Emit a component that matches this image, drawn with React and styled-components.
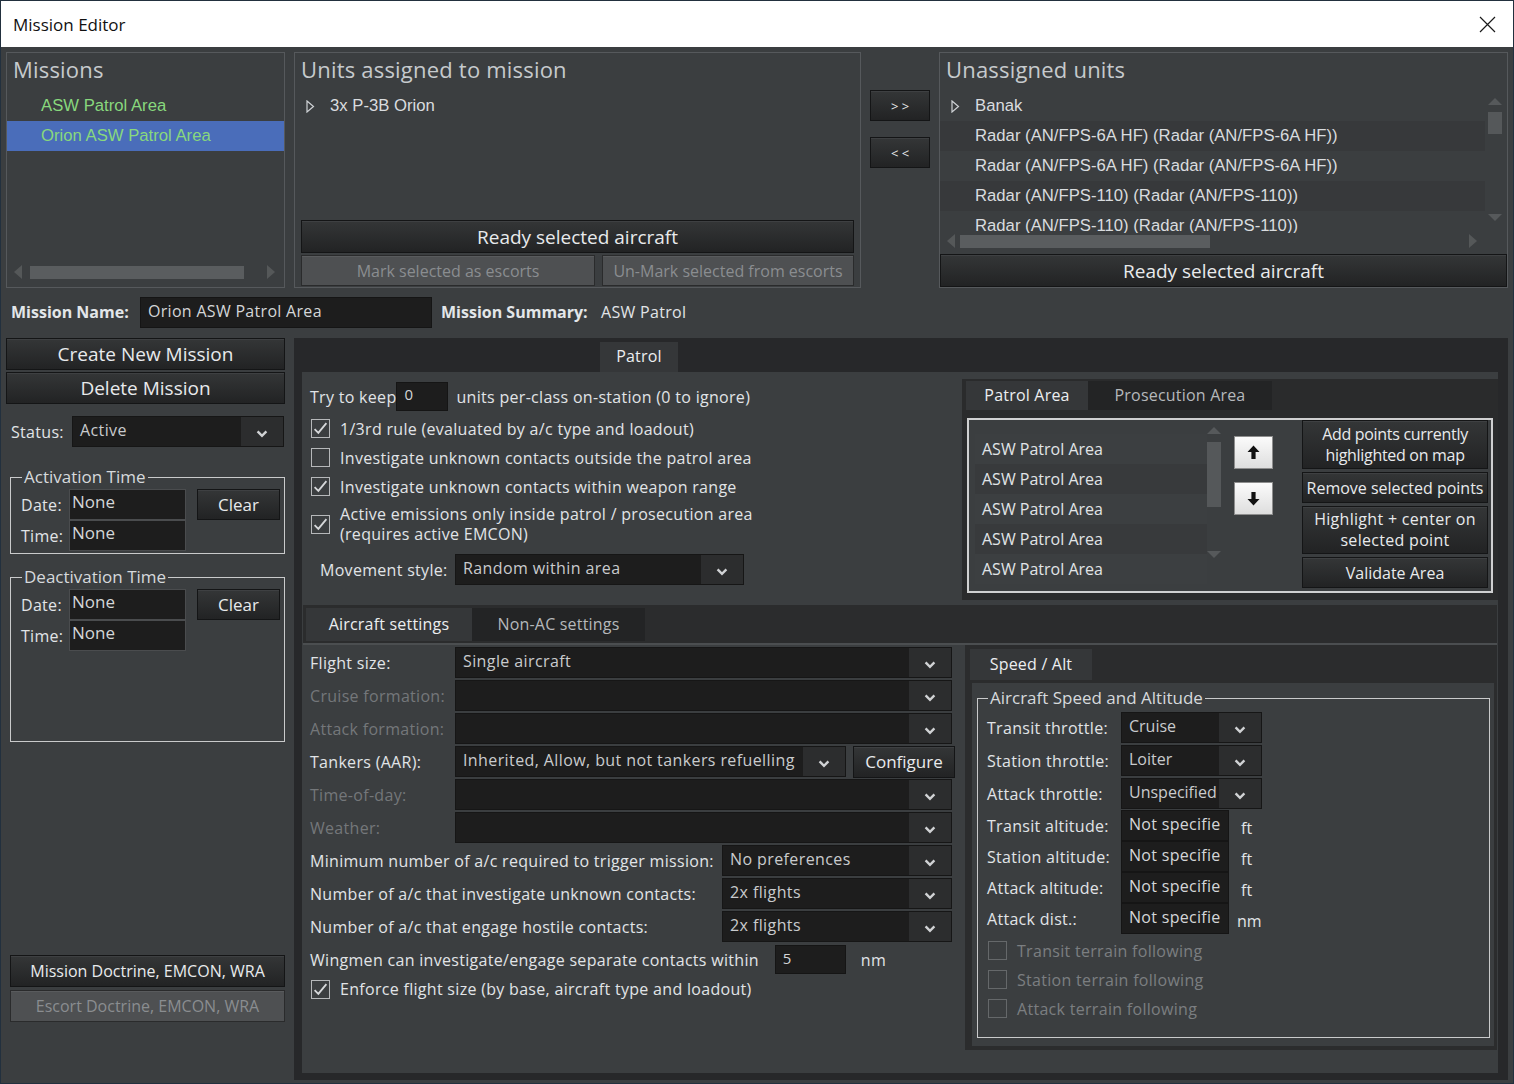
import React from "react";
import styled, { createGlobalStyle, css } from "styled-components";

const UI = `"Open Sans", "Noto Sans", "DejaVu Sans", sans-serif`;
const ARIAL = `"Liberation Sans", Arial, sans-serif`;

const GlobalStyle = createGlobalStyle`
  * { box-sizing: border-box; }
  html, body { margin: 0; padding: 0; background: #ffffff; }
  body { font-family: ${UI}; }
`;

/* ---------- window frame ---------- */
const Window = styled.div`
  width: 1514px;
  height: 1084px;
  border: 1px solid #22303e;
  display: flex;
  flex-direction: column;
  overflow: hidden;
`;
const TitleBar = styled.div`
  height: 46px;
  flex: none;
  background: #ffffff;
  display: flex;
  align-items: center;
  justify-content: space-between;
  padding-left: 12px;
`;
const TitleText = styled.div`
  font: 17px ${UI};
  color: #111;
`;
const CloseButton = styled.div`
  width: 50px;
  height: 46px;
  display: flex;
  align-items: center;
  justify-content: center;
  margin-right: 1px;
`;
const Body = styled.div`
  flex: 1;
  min-height: 0;
  background: #3b3e40;
  padding: 5px 5px 3px 5px;
  display: flex;
  flex-direction: column;
`;

/* ---------- generic pieces ---------- */
const Spacer = styled.div`
  flex: 1;
`;
const Panel = styled.div`
  display: flex;
  flex-direction: column;
  border: 1px solid #56595c;
  ${(p) => (p.$w ? `width:${p.$w}px; flex:none;` : `flex:1; min-width:0;`)}
`;
const PanelTitle = styled.div`
  height: 38px;
  flex: none;
  padding-left: 6px;
  font: 22px/33px ${UI};
  letter-spacing: 0.2px;
  color: #c6cacd;
`;
const Btn = styled.div`
  display: flex;
  align-items: center;
  justify-content: center;
  text-align: center;
  flex: none;
  height: ${(p) => p.$h ?? 31}px;
  ${(p) => (p.$w ? `width:${p.$w}px;` : "")}
  ${(p) => (p.$grow ? "flex:1;" : "")}
  margin: ${(p) => p.$m ?? "0"};
  font: ${(p) => p.$fs ?? 16}px/${(p) => p.$lh ?? 20}px ${UI};
  letter-spacing: ${(p) => p.$ls ?? 0}px;
  color: #e8eaec;
  background: linear-gradient(#343637, #222324);
  border: 1px solid #141516;
  box-shadow: inset 0 1px 0 #3e4042;
  white-space: nowrap;
  ${(p) =>
    p.$disabled &&
    css`
      color: #8a8d90;
      background: #4e5052;
      border-color: #2a2b2c;
      box-shadow: inset 0 1px 0 #595b5d;
    `}
  ${(p) =>
    p.$light &&
    css`
      background: linear-gradient(#fbfbfb, #dedede);
      border-color: #8e8e8e;
      box-shadow: none;
    `}
`;
const Tri = styled.span`
  width: 0;
  height: 0;
  flex: none;
  ${(p) =>
    p.$dir === "left" &&
    css`
      border-top: 7px solid transparent;
      border-bottom: 7px solid transparent;
      border-right: 8px solid #555859;
    `}
  ${(p) =>
    p.$dir === "right" &&
    css`
      border-top: 7px solid transparent;
      border-bottom: 7px solid transparent;
      border-left: 8px solid #555859;
    `}
  ${(p) =>
    p.$dir === "up" &&
    css`
      border-left: 7px solid transparent;
      border-right: 7px solid transparent;
      border-bottom: 7px solid #56595b;
    `}
  ${(p) =>
    p.$dir === "down" &&
    css`
      border-left: 7px solid transparent;
      border-right: 7px solid transparent;
      border-top: 7px solid #56595b;
    `}
`;
const HScroll = styled.div`
  height: 16px;
  flex: none;
  display: flex;
  align-items: center;
  padding: 0 ${(p) => p.$pr}px 0 ${(p) => p.$pl}px;
  margin-bottom: ${(p) => p.$mb ?? 0}px;
`;
const HThumb = styled.div`
  height: 13px;
  flex: none;
  background: #5a5d5f;
  width: ${(p) => p.$w}px;
  margin-left: ${(p) => p.$ml}px;
`;
const VScroll = styled.div`
  width: 14px;
  flex: none;
  display: flex;
  flex-direction: column;
  align-items: center;
  height: ${(p) => p.$h}px;
  margin: ${(p) => p.$m};
`;
const VThumb = styled.div`
  width: 14px;
  background: #55585a;
  height: ${(p) => p.$h}px;
  margin-top: ${(p) => p.$mt}px;
`;

/* ---------- top row ---------- */
const TopRow = styled.div`
  display: flex;
  gap: 9px;
  height: 236px;
  flex: none;
`;
const MissionItem = styled.div`
  height: 30px;
  flex: none;
  padding-left: 34px;
  font: 16.7px/30px ${ARIAL};
  color: #88d87d;
  background: ${(p) => (p.$selected ? "#4a6dba" : "transparent")};
`;
const TreeRow = styled.div`
  height: 30px;
  flex: none;
  display: flex;
  align-items: center;
  padding-left: ${(p) => p.$pl}px;
  font: 16.7px ${ARIAL};
  color: #d9dcdf;
  white-space: nowrap;
  background: ${(p) => (p.$alt ? "#37393b" : "transparent")};
`;
const TreeText = styled.span`
  margin-left: ${(p) => p.$ml ?? 0}px;
`;
const ButtonPair = styled.div`
  display: flex;
  gap: 7px;
  margin: 2px 6px 1px 6px;
  flex: none;
`;
const ArrowCol = styled.div`
  width: 60px;
  flex: none;
  display: flex;
  flex-direction: column;
  gap: 16px;
  padding-top: 38px;
`;
const ListWrap = styled.div`
  height: 142px;
  flex: none;
  display: flex;
`;
const ListRows = styled.div`
  flex: 1;
  overflow: hidden;
  min-width: 0;
`;

/* ---------- name row ---------- */
const NameRow = styled.div`
  display: flex;
  align-items: center;
  height: 32px;
  flex: none;
  margin-top: 8px;
`;
const BoldLabel = styled.div`
  font: 700 16px ${UI};
  color: #e3e6e9;
  white-space: nowrap;
  width: ${(p) => p.$w}px;
  padding-left: ${(p) => p.$pl ?? 0}px;
  flex: none;
`;
const TextField = styled.div`
  height: ${(p) => p.$h ?? 31}px;
  width: ${(p) => p.$w}px;
  flex: none;
  background: #1d1d1d;
  border: 1px solid ${(p) => p.$border ?? "#151515"};
  font: ${(p) => p.$fs ?? 16}px/${(p) => p.$lh ?? 26}px ${UI};
  letter-spacing: ${(p) => p.$ls ?? 0.3}px;
  color: #d4d6d8;
  padding-left: ${(p) => p.$pl ?? 7}px;
  white-space: nowrap;
  overflow: hidden;
  margin: ${(p) => p.$m ?? "0"};
`;
const PlainText = styled.div`
  font: ${(p) => p.$fs ?? 16}px ${UI};
  letter-spacing: 0.3px;
  color: ${(p) => (p.$dim ? "#74777a" : "#e1e4e7")};
  white-space: nowrap;
  margin: ${(p) => p.$m ?? "0"};
  ${(p) => (p.$w ? `width:${p.$w}px; flex:none;` : "")}
`;

/* ---------- bottom ---------- */
const BottomRow = styled.div`
  flex: 1;
  min-height: 0;
  display: flex;
  gap: 9px;
  margin-top: 10px;
`;
const LeftCol = styled.div`
  width: 279px;
  flex: none;
  display: flex;
  flex-direction: column;
`;
const StatusRow = styled.div`
  display: flex;
  align-items: center;
  margin-top: 12px;
  height: 31px;
  flex: none;
`;
const Group = styled.fieldset`
  margin: ${(p) => p.$m ?? "0"};
  padding: ${(p) => p.$pad ?? "0"};
  border: 1px solid #c9cacb;
  min-width: 0;
  ${(p) => (p.$h ? `height:${p.$h}px; flex:none;` : p.$fill ? "flex:1;" : "flex:none;")}
`;
const Legend = styled.legend`
  font: ${(p) => p.$fs ?? 17}px/20px ${UI};
  color: #d6d9dc;
  padding: 0 2px;
  margin-left: ${(p) => p.$ml ?? 1}px;
`;
const TimeGrid = styled.div`
  display: grid;
  grid-template-columns: 48px 117px auto;
  grid-auto-rows: 31px;
  align-items: center;
`;
const ChevronBox = styled.div`
  width: ${(p) => p.$w ?? 42}px;
  flex: none;
  background: #2c2d2e;
  display: flex;
  align-items: center;
  justify-content: center;
  padding-top: 5px;
`;
const SelectBox = styled.div`
  display: flex;
  height: ${(p) => p.$h ?? 31}px;
  ${(p) => (p.$w ? `width:${p.$w}px; flex:none;` : "flex:1;")}
  background: #1d1d1d;
  border: 1px solid #161616;
`;
const SelectValue = styled.div`
  flex: 1;
  min-width: 0;
  padding-left: 7px;
  font: 16px/27px ${UI};
  letter-spacing: ${(p) => p.$ls ?? 0.4}px;
  color: #c9cbcd;
  white-space: nowrap;
  overflow: hidden;
`;

/* ---------- right tab area ---------- */
const TabContainer = styled.div`
  flex: 1;
  min-width: 0;
  background: #27282a;
  display: flex;
  flex-direction: column;
`;
const MainTabBar = styled.div`
  height: 34px;
  flex: none;
  display: flex;
  align-items: flex-end;
  padding-left: 306px;
`;
const Tab = styled.div`
  height: ${(p) => p.$h ?? 30}px;
  width: ${(p) => p.$w}px;
  flex: none;
  display: flex;
  align-items: center;
  justify-content: center;
  padding-bottom: 2px;
  font: 16px ${UI};
  letter-spacing: 0.2px;
  color: ${(p) => (p.$active ? "#eceef0" : "#b5b8bb")};
  background: ${(p) => (p.$active ? "#353739" : "#232425")};
`;
const MainPane = styled.div`
  flex: 1;
  min-height: 0;
  margin: 0 10px 7px 8px;
  background: #3b3e40;
  display: flex;
  flex-direction: column;
`;
const TopSection = styled.div`
  height: 228px;
  flex: none;
  display: flex;
`;
const PatrolLeft = styled.div`
  flex: 1;
  padding: 10px 0 0 8px;
  display: flex;
  flex-direction: column;
`;
const InlineRow = styled.div`
  display: flex;
  align-items: center;
  height: ${(p) => p.$h ?? 29}px;
  flex: none;
  margin: ${(p) => p.$m ?? "0"};
`;
const CheckRow = styled.div`
  display: flex;
  align-items: center;
  gap: 10px;
  min-height: ${(p) => p.$h ?? 29}px;
  flex: none;
  padding-left: 1px;
  margin: ${(p) => p.$m ?? "0"};
`;
const CheckText = styled.div`
  font: 16px/20px ${UI};
  letter-spacing: 0.3px;
  color: ${(p) => (p.$dim ? "#7b7e81" : "#e1e4e7")};
  white-space: nowrap;
`;
const CheckBoxFrame = styled.span`
  width: 19px;
  height: 19px;
  flex: none;
  border: 1px solid ${(p) => (p.$dim ? "#65686a" : "#b6b8ba")};
  display: inline-flex;
  align-items: center;
  justify-content: center;
`;
const PatrolAreaGroup = styled.div`
  width: 536px;
  height: 221px;
  flex: none;
  margin-top: 7px;
  background: #2a2b2c;
  display: flex;
  flex-direction: column;
`;
const SubTabBar = styled.div`
  display: flex;
  flex: none;
  padding: ${(p) => p.$pad};
  height: ${(p) => p.$h}px;
`;
const AreaBox = styled.div`
  margin: 8px 5px 0 5px;
  height: 175px;
  flex: none;
  border: 2px solid #cfd0d1;
  background: #3b3e40;
  display: flex;
  align-items: flex-start;
`;
const AreaList = styled.div`
  width: 232px;
  flex: none;
  margin: 14px 0 0 6px;
`;
const AreaRow = styled.div`
  height: 30px;
  padding-left: 7px;
  font: 16px/30px ${UI};
  color: #e1e4e7;
  background: ${(p) => (p.$alt ? "#383a3c" : "#3c3f41")};
`;
const ArrowBtnCol = styled.div`
  display: flex;
  flex-direction: column;
  gap: 13px;
  margin: 16px 0 0 13px;
  flex: none;
`;
const AreaBtnCol = styled.div`
  width: 186px;
  flex: none;
  display: flex;
  flex-direction: column;
  gap: 3px;
  margin-left: 29px;
`;
const LowerTabs = styled.div`
  flex: 1;
  min-height: 0;
  margin: 5px 1px 0 1px;
  background: #2b2c2d;
  display: flex;
  flex-direction: column;
`;
const LowerPane = styled.div`
  flex: 1;
  min-height: 0;
  border-top: 2px solid #4b4e50;
  background: #3b3e40;
  display: flex;
`;
const LeftForm = styled.div`
  width: 662px;
  flex: none;
  padding: 1px 0 0 7px;
  display: flex;
  flex-direction: column;
`;
const FormRow = styled.div`
  display: flex;
  align-items: center;
  height: ${(p) => p.$h ?? 33}px;
  flex: none;
  margin: ${(p) => p.$m ?? "0"};
`;
const SpeedAlt = styled.div`
  flex: 1;
  margin-bottom: 23px;
  background: #2b2c2d;
  padding: 4px 3px 4px 5px;
  display: flex;
  flex-direction: column;
`;
const SpeedContent = styled.div`
  flex: 1;
  margin: 3px 0 0 2px;
  background: #3b3e40;
  padding: 5px 4px 8px 5px;
  display: flex;
  flex-direction: column;
`;
const UnitText = styled.div`
  font: 16px ${UI};
  color: #e1e4e7;
  margin: 4px 0 0 ${(p) => p.$ml}px;
`;

/* ---------- icons ---------- */
const CloseIcon = () => (
  <svg width="17" height="17" viewBox="0 0 17 17">
    <path d="M1 1 L16 16 M16 1 L1 16" stroke="#1a1a1a" strokeWidth="1.2" />
  </svg>
);
const Chevron = () => (
  <svg width="12" height="8" viewBox="0 0 12 8">
    <path d="M1.6 1.4 L6 5.8 L10.4 1.4" fill="none" stroke="#d0d2d4" strokeWidth="2.4" />
  </svg>
);
const TreeToggle = () => (
  <svg width="9" height="13" viewBox="0 0 9 13">
    <path d="M1 1 L7.5 6.5 L1 12 Z" fill="none" stroke="#cfd2d5" strokeWidth="1.2" />
  </svg>
);
const CheckMark = () => (
  <svg width="15" height="15" viewBox="0 0 14 14">
    <path d="M1.5 7.5 L5 11 L12.5 2" fill="none" stroke="#d6d8da" strokeWidth="1.7" />
  </svg>
);
const ArrowUp = ({ down }) => (
  <svg width="13" height="15" viewBox="0 0 13 15" style={down ? { transform: "rotate(180deg)" } : undefined}>
    <path d="M6.5 0.5 L12.5 7 H8.6 V14 H4.4 V7 H0.5 Z" fill="#111" />
  </svg>
);

/* ---------- compositions ---------- */
const Select = ({ w, value = "", h, arrowW, ls }) => (
  <SelectBox $w={w} $h={h}>
    <SelectValue $ls={ls}>{value}</SelectValue>
    <ChevronBox $w={arrowW}>
      <Chevron />
    </ChevronBox>
  </SelectBox>
);
const Check = ({ checked, dim, children, h, m }) => (
  <CheckRow $h={h} $m={m}>
    <CheckBoxFrame $dim={dim}>{checked && <CheckMark />}</CheckBoxFrame>
    <CheckText $dim={dim}>{children}</CheckText>
  </CheckRow>
);

const TimeGroup = ({ title, h, m }) => (
  <Group $m={m} $h={h} $pad="2px 4px 2px 10px">
    <Legend>{title}</Legend>
    <TimeGrid>
      <PlainText>Date:</PlainText>
      <TextField $w={117} $fs={17} $lh={24} $pl={2} $ls={0} $border="#4a4c4e">
        None
      </TextField>
      <Btn $w={83} $m="0 0 0 11px" $fs={17}>
        Clear
      </Btn>
      <PlainText>Time:</PlainText>
      <TextField $w={117} $fs={17} $lh={24} $pl={2} $ls={0} $border="#4a4c4e">
        None
      </TextField>
    </TimeGrid>
  </Group>
);

const unassigned = [
  "Radar (AN/FPS-6A HF) (Radar (AN/FPS-6A HF))",
  "Radar (AN/FPS-6A HF) (Radar (AN/FPS-6A HF))",
  "Radar (AN/FPS-110) (Radar (AN/FPS-110))",
  "Radar (AN/FPS-110) (Radar (AN/FPS-110))",
];

const formRows = [
  { label: "Flight size:", value: "Single aircraft" },
  { label: "Cruise formation:", dim: true },
  { label: "Attack formation:", dim: true },
  { label: "Tankers (AAR):", value: "Inherited, Allow, but not tankers refuelling", configure: true },
  { label: "Time-of-day:", dim: true },
  { label: "Weather:", dim: true },
];
const wideRows = [
  { label: "Minimum number of a/c required to trigger mission:", value: "No preferences" },
  { label: "Number of a/c that investigate unknown contacts:", value: "2x flights" },
  { label: "Number of a/c that engage hostile contacts:", value: "2x flights" },
];
const throttleRows = [
  { label: "Transit throttle:", value: "Cruise" },
  { label: "Station throttle:", value: "Loiter" },
  { label: "Attack throttle:", value: "Unspecified" },
];
const altRows = [
  { label: "Transit altitude:", unit: "ft", ml: 12 },
  { label: "Station altitude:", unit: "ft", ml: 12 },
  { label: "Attack altitude:", unit: "ft", ml: 12 },
  { label: "Attack dist.:", unit: "nm", ml: 8 },
];

export default function App() {
  return (
    <>
      <GlobalStyle />
      <Window>
        <TitleBar>
          <TitleText>Mission Editor</TitleText>
          <CloseButton>
            <CloseIcon />
          </CloseButton>
        </TitleBar>
        <Body>
          <TopRow>
            <Panel $w={279}>
              <PanelTitle>Missions</PanelTitle>
              <MissionItem>ASW Patrol Area</MissionItem>
              <MissionItem $selected>Orion ASW Patrol Area</MissionItem>
              <Spacer />
              <HScroll $pl={7} $pr={9} $mb={7}>
                <Tri $dir="left" />
                <HThumb $w={214} $ml={8} />
                <Spacer />
                <Tri $dir="right" />
              </HScroll>
            </Panel>

            <Panel $w={567}>
              <PanelTitle>Units assigned to mission</PanelTitle>
              <TreeRow $pl={11}>
                <TreeToggle />
                <TreeText $ml={15}>3x P-3B Orion</TreeText>
              </TreeRow>
              <Spacer />
              <Btn $h={33} $m="0 6px" $fs={19}>
                Ready selected aircraft
              </Btn>
              <ButtonPair>
                <Btn $disabled $grow $fs={16}>
                  Mark selected as escorts
                </Btn>
                <Btn $disabled $w={252} $fs={16}>
                  Un-Mark selected from escorts
                </Btn>
              </ButtonPair>
            </Panel>

            <ArrowCol>
              <Btn $fs={13}>&gt; &gt;</Btn>
              <Btn $fs={13}>&lt; &lt;</Btn>
            </ArrowCol>

            <Panel>
              <PanelTitle>Unassigned units</PanelTitle>
              <ListWrap>
                <ListRows>
                  <TreeRow $pl={11}>
                    <TreeToggle />
                    <TreeText $ml={15}>Banak</TreeText>
                  </TreeRow>
                  {unassigned.map((t, i) => (
                    <TreeRow key={i} $pl={35} $alt={i % 2 === 0}>
                      {t}
                    </TreeRow>
                  ))}
                </ListRows>
                <VScroll $h={138} $m="4px 5px 0 3px">
                  <Tri $dir="up" style={{ marginTop: 3 }} />
                  <VThumb $h={22} $mt={7} />
                  <Spacer />
                  <Tri $dir="down" style={{ marginBottom: 12 }} />
                </VScroll>
              </ListWrap>
              <HScroll $pl={7} $pr={30}>
                <Tri $dir="left" />
                <HThumb $w={250} $ml={5} />
                <Spacer />
                <Tri $dir="right" />
              </HScroll>
              <Spacer />
              <Btn $h={33} $fs={19}>
                Ready selected aircraft
              </Btn>
            </Panel>
          </TopRow>

          <NameRow>
            <BoldLabel $w={134} $pl={5}>
              Mission Name:
            </BoldLabel>
            <TextField $w={292} $h={31} $fs={16} $lh={27}>
              Orion ASW Patrol Area
            </TextField>
            <BoldLabel $w={169} $pl={9}>
              Mission Summary:
            </BoldLabel>
            <PlainText>ASW Patrol</PlainText>
          </NameRow>

          <BottomRow>
            <LeftCol>
              <Btn $h={32} $fs={19}>
                Create New Mission
              </Btn>
              <Btn $h={32} $fs={19} $m="2px 0 0 0">
                Delete Mission
              </Btn>
              <StatusRow>
                <PlainText $w={61} $m="0 0 0 5px">
                  Status:
                </PlainText>
                <Select w={212} value="Active" />
              </StatusRow>
              <TimeGroup title="Activation Time" m="20px 0 0 4px" />
              <TimeGroup title="Deactivation Time" m="13px 0 0 4px" h={175} />
              <Spacer />
              <Btn $h={32} $fs={16} $m="0 0 0 4px">
                Mission Doctrine, EMCON, WRA
              </Btn>
              <Btn $h={32} $fs={16} $m="3px 0 58px 4px" $disabled>
                Escort Doctrine, EMCON, WRA
              </Btn>
            </LeftCol>

            <TabContainer>
              <MainTabBar>
                <Tab $active $w={78}>
                  Patrol
                </Tab>
              </MainTabBar>
              <MainPane>
                <TopSection>
                  <PatrolLeft>
                    <InlineRow>
                      <PlainText>Try to keep</PlainText>
                      <TextField $w={52} $h={29} $fs={15} $lh={22} $m="0">
                        0
                      </TextField>
                      <PlainText $m="0 0 0 8px">units per-class on-station (0 to ignore)</PlainText>
                    </InlineRow>
                    <Check checked m="3px 0 0 0">
                      1/3rd rule (evaluated by a/c type and loadout)
                    </Check>
                    <Check>Investigate unknown contacts outside the patrol area</Check>
                    <Check checked>Investigate unknown contacts within weapon range</Check>
                    <Check checked h={40} m="3px 0 0 0">
                      Active emissions only inside patrol / prosecution area
                      <br />
                      (requires active EMCON)
                    </Check>
                    <InlineRow $h={31} $m="10px 0 0 10px">
                      <PlainText $w={135}>Movement style:</PlainText>
                      <Select w={289} value="Random within area" />
                    </InlineRow>
                  </PatrolLeft>

                  <PatrolAreaGroup>
                    <SubTabBar $pad="2px 0 0 4px" $h={31}>
                      <Tab $active $w={122} $h={29}>
                        Patrol Area
                      </Tab>
                      <Tab $w={184} $h={29}>
                        Prosecution Area
                      </Tab>
                    </SubTabBar>
                    <AreaBox>
                      <AreaList>
                        {[0, 1, 2, 3, 4].map((i) => (
                          <AreaRow key={i} $alt={i % 2 === 1}>
                            ASW Patrol Area
                          </AreaRow>
                        ))}
                      </AreaList>
                      <VScroll $h={135} $m="7px 0 0 0">
                        <Tri $dir="up" />
                        <VThumb $h={65} $mt={8} />
                        <Spacer />
                        <Tri $dir="down" style={{ marginBottom: 4 }} />
                      </VScroll>
                      <ArrowBtnCol>
                        <Btn $light $w={39} $h={33}>
                          <ArrowUp />
                        </Btn>
                        <Btn $light $w={39} $h={33}>
                          <ArrowUp down />
                        </Btn>
                      </ArrowBtnCol>
                      <AreaBtnCol>
                        <Btn $h={49} $fs={16} $lh={21} $ls={-0.3}>
                          Add points currently
                          <br />
                          highlighted on map
                        </Btn>
                        <Btn $h={31} $fs={16}>
                          Remove selected points
                        </Btn>
                        <Btn $h={48} $fs={16} $lh={21} $ls={0.3}>
                          Highlight + center on
                          <br />
                          selected point
                        </Btn>
                        <Btn $h={31} $fs={16}>
                          Validate Area
                        </Btn>
                      </AreaBtnCol>
                    </AreaBox>
                  </PatrolAreaGroup>
                </TopSection>

                <LowerTabs>
                  <SubTabBar $pad="3px 0 0 3px" $h={38}>
                    <Tab $active $w={166} $h={33}>
                      Aircraft settings
                    </Tab>
                    <Tab $w={173} $h={33}>
                      Non-AC settings
                    </Tab>
                  </SubTabBar>
                  <LowerPane>
                    <LeftForm>
                      {formRows.map((r) => (
                        <FormRow key={r.label}>
                          <PlainText $w={145} $dim={r.dim}>
                            {r.label}
                          </PlainText>
                          {r.configure ? (
                            <>
                              <Select w={391} value={r.value} />
                              <Btn $w={102} $h={32} $fs={17} $m="0 0 0 7px">
                                Configure
                              </Btn>
                            </>
                          ) : (
                            <Select w={497} value={r.value} />
                          )}
                        </FormRow>
                      ))}
                      {wideRows.map((r, i) => (
                        <FormRow key={i}>
                          <PlainText $w={412}>{r.label}</PlainText>
                          <Select w={230} value={r.value} />
                        </FormRow>
                      ))}
                      <FormRow>
                        <PlainText>Wingmen can investigate/engage separate contacts within</PlainText>
                        <TextField $w={71} $h={29} $fs={15} $lh={24} $m="0 0 0 16px">
                          5
                        </TextField>
                        <PlainText $m="0 0 0 15px">nm</PlainText>
                      </FormRow>
                      <Check checked h={26}>
                        Enforce flight size (by base, aircraft type and loadout)
                      </Check>
                    </LeftForm>

                    <SpeedAlt>
                      <Tab $active $w={122} $h={31}>
                        Speed / Alt
                      </Tab>
                      <SpeedContent>
                        <Group $fill $pad="3px 4px 0 9px">
                          <Legend $fs={17}>Aircraft Speed and Altitude</Legend>
                          {throttleRows.map((r) => (
                            <FormRow key={r.label}>
                              <PlainText $w={134}>{r.label}</PlainText>
                              <Select w={141} value={r.value} ls={0} />
                            </FormRow>
                          ))}
                          {altRows.map((r) => (
                            <FormRow key={r.label} $h={31}>
                              <PlainText $w={134}>{r.label}</PlainText>
                              <TextField $w={108} $h={31} $fs={16} $lh={26}>
                                Not specifie
                              </TextField>
                              <UnitText $ml={r.ml}>{r.unit}</UnitText>
                            </FormRow>
                          ))}
                          <Check dim m="2px 0 0 0">
                            Transit terrain following
                          </Check>
                          <Check dim>Station terrain following</Check>
                          <Check dim>Attack terrain following</Check>
                        </Group>
                      </SpeedContent>
                    </SpeedAlt>
                  </LowerPane>
                </LowerTabs>
              </MainPane>
            </TabContainer>
          </BottomRow>
        </Body>
      </Window>
    </>
  );
}
